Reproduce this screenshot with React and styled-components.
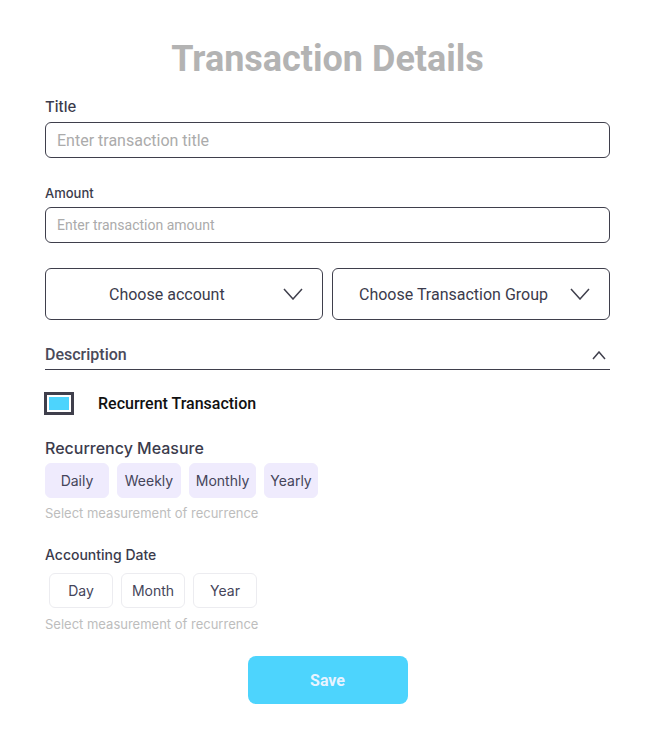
import React from "react";
import styled, { createGlobalStyle } from "styled-components";

const GlobalStyle = createGlobalStyle`
  body {
    margin: 0;
    background: #fff;
    font-family: Roboto, "Liberation Sans", sans-serif;
  }
`;

const Page = styled.main`
  width: 655px;
  padding: 38px 45px 40px;
  box-sizing: border-box;
  display: flex;
  flex-flow: column;
`;
const Heading = styled.h1`
  margin: 0 0 17px;
  text-align: center;
  font-size: 36px;
  font-weight: 700;
  color: #b3b3b3;
  line-height: 42px;
`;
const Label = styled.label`
  display: block;
  font-family: Inter, sans-serif;
  font-weight: 500;
  font-size: ${({ size }) => size || "14px"};
  color: #3b3b4c;
  line-height: 20px;
  margin-bottom: ${({ gap }) => gap || "6px"};
`;
const Input = styled.input`
  display: block;
  width: 100%;
  box-sizing: border-box;
  height: ${({ h }) => h || "36px"};
  border: 1px solid #3f3f4c;
  border-radius: 6px;
  padding: 0 11px;
  font-family: Roboto, sans-serif;
  font-size: ${({ size }) => size || "16px"};
  outline: none;
  &::placeholder {
    color: #ababab;
  }
`;
const Field = styled.div`
  margin-bottom: ${({ mb }) => mb || "0"};
`;
const Selects = styled.div`
  display: grid;
  grid-template-columns: 1fr 1fr;
  gap: 9px;
  margin-top: 25px;
`;
const Select = styled.div`
  height: 52px;
  box-sizing: border-box;
  border: 1px solid #3f3f4c;
  border-radius: 6px;
  display: flex;
  align-items: center;
  justify-content: space-between;
  padding: 0 19px 0 ${({ pl }) => pl || "63px"};
  font-size: 16px;
  color: #3b3b4c;
`;
const Collapse = styled.div`
  margin-top: 25px;
  display: flex;
  align-items: center;
  justify-content: space-between;
  padding: 0 4px 4px 0;
  border-bottom: 1px solid #3f3f4c;
  font-size: 16px;
  font-weight: 500;
  color: #4a4a5a;
  line-height: 20px;
`;
const CheckRow = styled.div`
  margin-top: 22px;
  display: flex;
  align-items: center;
  gap: 24px;
  font-size: 16px;
  font-weight: 500;
  color: #111;
`;
const Checkbox = styled.div`
  width: 30px;
  height: 23px;
  margin-left: -1px;
  box-sizing: border-box;
  border: 3px solid #3f3f4c;
  padding: 2px;
  background: #fff;
  &::after {
    content: "";
    display: block;
    width: 100%;
    height: 100%;
    background: #4dd4fd;
  }
`;
const Chips = styled.div`
  display: flex;
  gap: 8px;
  padding-left: ${({ inset }) => inset || "0"};
`;
const Chip = styled.button`
  height: 35px;
  width: ${({ w }) => w || "64px"};
  padding: 0;
  border-radius: 6px;
  border: 1px solid ${({ outline }) => (outline ? "#ececf0" : "#efebfd")};
  background: ${({ outline }) => (outline ? "#fff" : "#efebfd")};
  font-family: Inter, sans-serif;
  font-size: 14px;
  font-weight: 400;
  color: #45455a;
`;
const Hint = styled.p`
  margin: ${({ mt }) => mt || "7px"} 0 0;
  font-family: Inter, sans-serif;
  font-size: 13px;
  color: #bdbdbd;
  line-height: 16px;
`;
const Section = styled.div`
  margin-top: ${({ mt }) => mt || "0"};
`;
const SaveButton = styled.button`
  align-self: center;
  margin-top: 24px;
  width: 160px;
  height: 48px;
  border: none;
  border-radius: 8px;
  background: #4dd4fd;
  color: #e8f3ff;
  font-family: Roboto, sans-serif;
  font-weight: 700;
  font-size: 16px;
`;

function Chevron({ up, w = 20, h = 10 }) {
  return (
    <svg width={w} height={h + 2} viewBox={`0 0 ${w} ${h + 2}`} fill="none">
      <path
        d={up ? `M1 ${h + 1} L${w / 2} 1 L${w - 1} ${h + 1}` : `M1 1 L${w / 2} ${h + 1} L${w - 1} 1`}
        stroke="#3f3f4c"
        strokeWidth="1.5"
      />
    </svg>
  );
}

export default function App() {
  return (
    <>
      <GlobalStyle />
      <Page>
        <Heading>Transaction Details</Heading>
        <Field mb="25px">
          <Label size="15px" gap="5px">Title</Label>
          <Input placeholder="Enter transaction title" />
        </Field>
        <Field>
          <Label size="13px" gap="4px">Amount</Label>
          <Input placeholder="Enter transaction amount" size="14px" />
        </Field>
        <Selects>
          <Select>
            Choose account
            <Chevron />
          </Select>
          <Select pl="26px">
            Choose Transaction Group
            <Chevron />
          </Select>
        </Selects>
        <Collapse>
          Description
          <Chevron up w={14} h={7} />
        </Collapse>
        <CheckRow>
          <Checkbox />
          Recurrent Transaction
        </CheckRow>
        <Section mt="23px">
          <Label size="16px" gap="5px">Recurrency Measure</Label>
          <Chips>
            <Chip>Daily</Chip>
            <Chip>Weekly</Chip>
            <Chip w="67px">Monthly</Chip>
            <Chip w="54px">Yearly</Chip>
          </Chips>
          <Hint>Select measurement of recurrence</Hint>
        </Section>
        <Section mt="24px">
          <Label size="14px" gap="8px">Accounting Date</Label>
          <Chips inset="4px">
            <Chip outline>Day</Chip>
            <Chip outline>Month</Chip>
            <Chip outline>Year</Chip>
          </Chips>
          <Hint mt="8px">Select measurement of recurrence</Hint>
        </Section>
        <SaveButton>Save</SaveButton>
      </Page>
    </>
  );
}
